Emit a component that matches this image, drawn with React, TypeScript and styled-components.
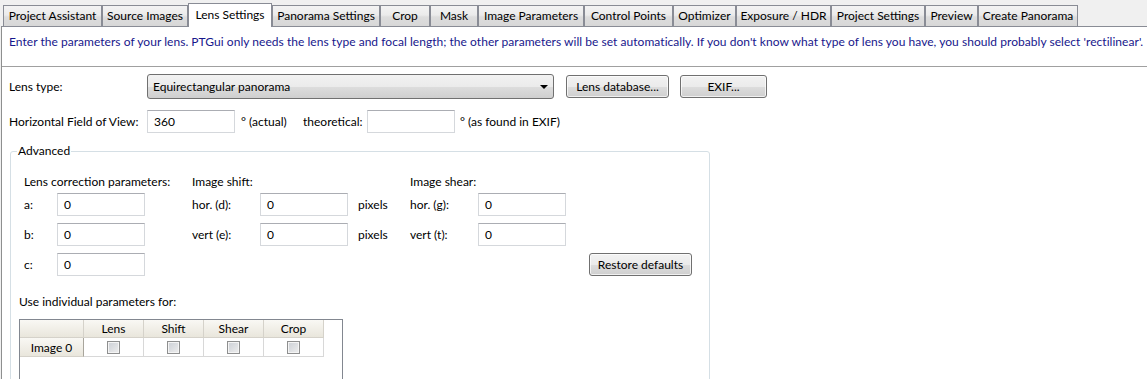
import styled, { createGlobalStyle } from 'styled-components';

const GlobalStyle = createGlobalStyle`
  html, body {
    margin: 0;
    padding: 0;
    background: #f0f0f0;
  }
  body {
    font-family: Lato, 'Liberation Sans', sans-serif;
    font-size: 12px;
    color: #000;
    overflow: hidden;
  }
  * {
    box-sizing: border-box;
  }
`;

const tabs = [
  { label: 'Project Assistant', width: 99 },
  { label: 'Source Images', width: 86 },
  { label: 'Lens Settings', width: 84, active: true },
  { label: 'Panorama Settings', width: 108 },
  { label: 'Crop', width: 50 },
  { label: 'Mask', width: 48 },
  { label: 'Image Parameters', width: 106 },
  { label: 'Control Points', width: 89 },
  { label: 'Optimizer', width: 63 },
  { label: 'Exposure / HDR', width: 95 },
  { label: 'Project Settings', width: 94 },
  { label: 'Preview', width: 53 },
  { label: 'Create Panorama', width: 100 },
];

const columns = ['Lens', 'Shift', 'Shear', 'Crop'];

function App() {
  return (
    <>
      <GlobalStyle />
      <Window>
        <TabBar>
          {tabs.map((t) => (
            <Tab key={t.label} $width={t.width} $active={!!t.active}>
              {t.label}
            </Tab>
          ))}
        </TabBar>
        <Pane>
          <Intro>
            Enter the parameters of your lens. PTGui only needs the lens type and focal length; the other
            parameters will be set automatically. If you don't know what type of lens you have, you should
            probably select 'rectilinear'.
          </Intro>
          <Form>
            <Row>
              <FieldLabel>Lens type:</FieldLabel>
              <Select>
                Equirectangular panorama
                <Caret />
              </Select>
              <Button $width={103} $gap={12}>Lens database...</Button>
              <Button $width={87} $gap={11}>EXIF...</Button>
            </Row>
            <Row $top={11}>
              <FieldLabel>Horizontal Field of View:</FieldLabel>
              <TextBox $width={88}>360</TextBox>
              <Unit $width={62}>° (actual)</Unit>
              <Unit $width={70}>theoretical:</Unit>
              <TextBox $width={88} />
              <Unit $width={120} $gap={5}>° (as found in EXIF)</Unit>
            </Row>
            <Group>
              <Legend>Advanced</Legend>
              <ParamGrid>
                <GridText $span={3}>Lens correction parameters:</GridText>
                <GridText $span={3}>Image shift:</GridText>
                <GridText $span={3}>Image shear:</GridText>

                <GridText>a:</GridText>
                <TextBox $width={88}>0</TextBox>
                <span />
                <GridText>hor. (d):</GridText>
                <TextBox $width={88}>0</TextBox>
                <GridText $pad={10}>pixels</GridText>
                <GridText>hor. (g):</GridText>
                <TextBox $width={88}>0</TextBox>
                <span />

                <GridText>b:</GridText>
                <TextBox $width={88}>0</TextBox>
                <span />
                <GridText>vert (e):</GridText>
                <TextBox $width={88}>0</TextBox>
                <GridText $pad={10}>pixels</GridText>
                <GridText>vert (t):</GridText>
                <TextBox $width={88}>0</TextBox>
                <span />

                <GridText>c:</GridText>
                <TextBox $width={88}>0</TextBox>
                <GridText $span={6} />
                <ButtonCell>
                  <Button $width={103}>Restore defaults</Button>
                </ButtonCell>
              </ParamGrid>

              <Caption>Use individual parameters for:</Caption>
              <Table>
                <HeadRow>
                  <HeadCell $width={64} />
                  {columns.map((c) => (
                    <HeadCell key={c} $width={60}>{c}</HeadCell>
                  ))}
                </HeadRow>
                <BodyRow>
                  <RowHead>Image 0</RowHead>
                  {columns.map((c) => (
                    <Cell key={c}>
                      <Check />
                    </Cell>
                  ))}
                </BodyRow>
              </Table>
            </Group>
          </Form>
        </Pane>
      </Window>
    </>
  );
}

const Window = styled.div`
  width: 1147px;
  height: 379px;
  overflow: hidden;
  display: flex;
  flex-direction: column;
`;

const TabBar = styled.div`
  flex-shrink: 0;
  display: flex;
  align-items: flex-end;
  height: 26px;
  padding-left: 3px;
`;

const Tab = styled.div<{ $width: number; $active: boolean }>`
  position: relative;
  z-index: ${({ $active }) => ($active ? 2 : 1)};
  width: ${({ $width }) => $width}px;
  height: ${({ $active }) => ($active ? 24 : 21)}px;
  margin-bottom: ${({ $active }) => ($active ? -1 : 0)}px;
  padding-bottom: ${({ $active }) => ($active ? 3 : 1)}px;
  display: flex;
  align-items: center;
  justify-content: center;
  white-space: nowrap;
  border: 1px solid #898c95;
  border-bottom: none;
  background: ${({ $active }) =>
    $active ? '#fff' : 'linear-gradient(to bottom, #f3f3f3 0%, #ebebeb 45%, #dddddd 55%, #d7d7d7 100%)'};
  color: #000;
`;

const Pane = styled.div`
  flex: 1;
  min-height: 0;
  overflow: hidden;
  margin-left: 1px;
  background: #fff;
  border-top: 1px solid #898c95;
  border-left: 1px solid #8e8f8f;
  display: flex;
  flex-direction: column;
`;

const Intro = styled.div`
  flex-shrink: 0;
  height: 40px;
  padding: 7px 0 0 7px;
  line-height: 16px;
  letter-spacing: 0.04px;
  color: #17178c;
  white-space: nowrap;
  border-bottom: 1px solid #a0a0a0;
`;

const Form = styled.div`
  flex-shrink: 0;
  padding: 7px 0 0 7px;
  display: flex;
  flex-direction: column;
`;

const Row = styled.div<{ $top?: number }>`
  flex-shrink: 0;
  display: flex;
  align-items: center;
  margin-top: ${({ $top }) => $top ?? 0}px;
  min-height: 23px;
`;

const FieldLabel = styled.div`
  width: 138px;
  white-space: nowrap;
`;

const Select = styled.div`
  position: relative;
  width: 407px;
  height: 25px;
  padding-left: 5px;
  display: flex;
  align-items: center;
  border: 1px solid #707070;
  border-radius: 3px;
  background: linear-gradient(to bottom, #f2f2f2 0%, #ebebeb 50%, #dddddd 51%, #cfcfcf 100%);
`;

const Caret = styled.span`
  position: absolute;
  right: 5px;
  top: 10px;
  width: 0;
  height: 0;
  border-left: 4px solid transparent;
  border-right: 4px solid transparent;
  border-top: 4px solid #000;
`;

const Button = styled.div<{ $width: number; $gap?: number }>`
  width: ${({ $width }) => $width}px;
  height: 23px;
  margin-left: ${({ $gap }) => $gap ?? 0}px;
  display: flex;
  align-items: center;
  justify-content: center;
  white-space: nowrap;
  border: 1px solid #707070;
  border-radius: 3px;
  background: linear-gradient(to bottom, #f2f2f2 0%, #ebebeb 50%, #dddddd 51%, #cfcfcf 100%);
  box-shadow: inset 0 0 0 1px rgba(255, 255, 255, 0.7);
`;

const TextBox = styled.div<{ $width: number }>`
  width: ${({ $width }) => $width}px;
  height: 23px;
  padding: 0 6px;
  display: flex;
  align-items: center;
  background: #fff;
  border: 1px solid #d5d8dc;
  border-top-color: #abadb3;
`;

const Unit = styled.div<{ $width: number; $gap?: number }>`
  width: ${({ $width }) => $width}px;
  padding-left: ${({ $gap }) => $gap ?? 6}px;
  white-space: nowrap;
`;

const Group = styled.fieldset`
  margin: 10px 0 0 1px;
  width: 700px;
  height: 250px;
  flex-shrink: 0;
  padding: 0 0 0 8px;
  border: 1px solid #d5dfe5;
  border-radius: 3px;
`;

const Legend = styled.legend`
  margin-left: -2px;
  padding: 0 1px;
  line-height: 16px;
`;

const ParamGrid = styled.div`
  margin: 11px 0 0 5px;
  display: grid;
  grid-template-columns: 33px 88px 47px 68px 88px 62px 68px 88px 126px;
  grid-template-rows: 23px 30px 30px 30px;
  align-items: start;
`;

const GridText = styled.div<{ $span?: number; $pad?: number }>`
  grid-column: span ${({ $span }) => $span ?? 1};
  height: 23px;
  line-height: 23px;
  padding-left: ${({ $pad }) => $pad ?? 0}px;
  white-space: nowrap;
`;

const ButtonCell = styled.div`
  display: flex;
  padding-left: 23px;
`;

const Caption = styled.div`
  margin-top: 11px;
  line-height: 16px;
`;

const Table = styled.div`
  margin-top: 9px;
  width: 324px;
  height: 90px;
  border: 1px solid #828790;
  background: #fff;
`;

const HeadRow = styled.div`
  display: flex;
  height: 18px;
`;

const HeadCell = styled.div<{ $width: number }>`
  width: ${({ $width }) => $width}px;
  display: flex;
  align-items: center;
  justify-content: center;
  border-right: 1px solid #d5d2ca;
  border-bottom: 1px solid #d5d2ca;
  background: linear-gradient(to bottom, #f9f8f4 0%, #f1efe8 50%, #e9e6dc 100%);
`;

const BodyRow = styled.div`
  display: flex;
  height: 19px;
`;

const RowHead = styled.div`
  width: 64px;
  display: flex;
  align-items: center;
  justify-content: center;
  border-right: 1px solid #a8a59c;
  border-bottom: 1px solid #d5d2ca;
  background: linear-gradient(to bottom, #f9f8f4 0%, #f1efe8 50%, #e9e6dc 100%);
`;

const Cell = styled.div`
  width: 60px;
  display: flex;
  align-items: center;
  justify-content: center;
  border-right: 1px solid #d8d8d8;
  border-bottom: 1px solid #d8d8d8;
`;

const Check = styled.span`
  width: 13px;
  height: 13px;
  border: 1px solid #8e8f8f;
  background: linear-gradient(135deg, #cbcfd5 0%, #eeeeee 100%);
  box-shadow: inset 0 0 0 1px #f4f4f4;
`;

export default App;
